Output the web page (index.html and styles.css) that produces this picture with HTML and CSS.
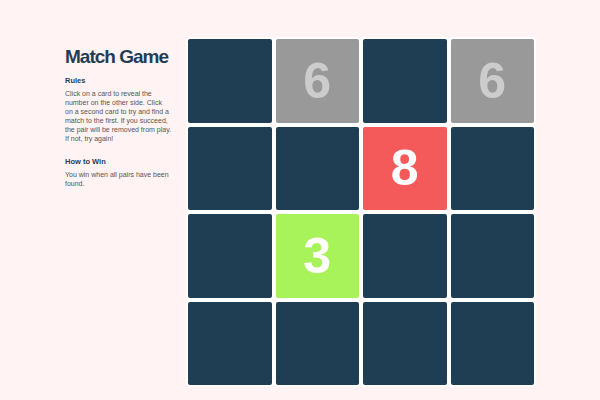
FILE: index.html
```html
<!DOCTYPE html>
<html>
<head>
<meta charset="utf-8">
<link rel="stylesheet" href="styles.css">
</head>
<body>
<div class="page">
  <aside class="info">
    <h1 class="title">Match Game</h1>
    <h2 class="sub">Rules</h2>
    <p class="text">Click on a card to reveal the number on the other side. Click<br>on a second card to try and find a match to the first. If you succeed, the pair will be removed from play. If not, try again!</p>
    <h2 class="sub">How to Win</h2>
    <p class="text">You win when all pairs have been found.</p>
  </aside>
  <main class="board">
    <div class="card"></div>
    <div class="card matched">6</div>
    <div class="card"></div>
    <div class="card matched">6</div>
    <div class="card"></div>
    <div class="card"></div>
    <div class="card wrong">8</div>
    <div class="card"></div>
    <div class="card"></div>
    <div class="card right">3</div>
    <div class="card"></div>
    <div class="card"></div>
    <div class="card"></div>
    <div class="card"></div>
    <div class="card"></div>
    <div class="card"></div>
  </main>
</div>
</body>
</html>
```
FILE: styles.css
```css
html, body {
  margin: 0;
  padding: 0;
  background: #fff3f3;
}
body {
  width: 600px;
  height: 400px;
  overflow: hidden;
  font-family: "Liberation Sans", Arial, sans-serif;
}
.page {
  display: flex;
  align-items: flex-start;
  padding: 37px 0 0 65px;
}
.info {
  width: 108px;
  margin-right: 13px;
}
.title {
  margin: 9px 0 8px;
  font-size: 19px;
  line-height: 22px;
  letter-spacing: -1px;
  color: #1f3d55;
  font-weight: bold;
}
.sub {
  margin: 0 0 4px;
  font-size: 7.5px;
  line-height: 9px;
  font-weight: bold;
  color: #1f3d55;
}
.text {
  margin: 0 0 14px;
  font-size: 7px;
  line-height: 9px;
  color: #555;
}
.board {
  display: grid;
  grid-template-columns: repeat(4, 87.5px);
  grid-template-rows: repeat(4, 87.5px);
}
.card {
  box-sizing: border-box;
  border: 2px solid #fff;
  border-radius: 4px;
  background: #1f3e54;
  display: flex;
  align-items: center;
  justify-content: center;
  font-size: 50px;
  font-weight: bold;
  color: #fff;
}
.matched {
  background: #999999;
  color: #cccccc;
}
.wrong {
  background: #f55a5a;
}
.right {
  background: #a8f25a;
}
```
